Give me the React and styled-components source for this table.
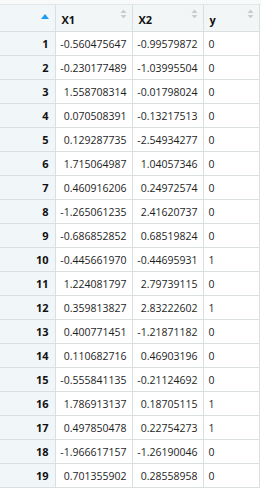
import React from 'react'
import styled, { createGlobalStyle } from 'styled-components'

const GlobalStyle = createGlobalStyle`
  body {
    margin: 0;
    background: #ffffff;
    font-family: "Open Sans", "Liberation Sans", sans-serif;
  }
`

const rows = [
  ['-0.560475647', '-0.99579872', '0'],
  ['-0.230177489', '-1.03995504', '0'],
  ['1.558708314', '-0.01798024', '0'],
  ['0.070508391', '-0.13217513', '0'],
  ['0.129287735', '-2.54934277', '0'],
  ['1.715064987', '1.04057346', '0'],
  ['0.460916206', '0.24972574', '0'],
  ['-1.265061235', '2.41620737', '0'],
  ['-0.686852852', '0.68519824', '0'],
  ['-0.445661970', '-0.44695931', '1'],
  ['1.224081797', '2.79739115', '0'],
  ['0.359813827', '2.83222602', '1'],
  ['0.400771451', '-1.21871182', '0'],
  ['0.110682716', '0.46903196', '0'],
  ['-0.555841135', '-0.21124692', '0'],
  ['1.786913137', '0.18705115', '1'],
  ['0.497850478', '0.22754273', '1'],
  ['-1.966617157', '-1.26190046', '0'],
  ['0.701355902', '0.28558958', '0'],
]

const Viewer = styled.div`
  width: 261px;
  height: 488px;
  overflow: hidden;
  background: #ffffff;
`

const TopStrip = styled.div`
  height: 4px;
  background: #f8f9f9;
  border-bottom: 1px solid #e2e6e7;
`

const Grid = styled.table`
  border-collapse: collapse;
  table-layout: fixed;
  width: 259px;
  font-size: 10.5px;
  color: #1e1e1e;
`

const HeadCell = styled.th`
  position: relative;
  height: 24px;
  padding: 2px 0 0 6px;
  background: #f3f6f7;
  border-right: 1px solid #dadfe0;
  border-bottom: 1px solid #dadfe0;
  text-align: left;
  font-weight: 700;
  font-size: 11px;
  color: #111;
  vertical-align: middle;
`

const IndexHead = styled(HeadCell)`
  background: #f1f6f8;
`

const SortIcon = styled.svg`
  position: absolute;
  top: 4px;
  right: 5px;
`

const UpArrow = styled.svg`
  position: absolute;
  top: 9px;
  right: 6px;
`

const Row = styled.tr`
  height: 24px;
`

const IndexCell = styled.td`
  height: 23px;
  padding: 0 6px 0 0;
  background: #f1f6f8;
  border-right: 1px solid #dadfe0;
  border-bottom: 1px solid #dadfe0;
  text-align: right;
  font-weight: 700;
  font-size: 11px;
  color: #111;
`

const Cell = styled.td`
  height: 23px;
  padding: ${p => (p.$num ? '0 5px 0 0' : '0 0 0 5px')};
  border-right: 1px solid #dadfe0;
  border-bottom: 1px solid #dadfe0;
  text-align: ${p => (p.$num ? 'right' : 'left')};
  white-space: nowrap;
`

const BothArrows = () => (
  <SortIcon width="7" height="10" viewBox="0 0 7 10">
    <path d="M3.5 0.5 L6.5 4 L0.5 4 Z" fill="#c9cdcf" />
    <path d="M0.5 6 L6.5 6 L3.5 9.5 Z" fill="#c9cdcf" />
  </SortIcon>
)

export default function App() {
  return (
    <Viewer>
      <GlobalStyle />
      <TopStrip />
      <Grid>
        <colgroup>
          <col style={{ width: 55 }} />
          <col style={{ width: 77 }} />
          <col style={{ width: 71 }} />
          <col style={{ width: 56 }} />
        </colgroup>
        <thead>
          <tr>
            <IndexHead>
              <UpArrow width="8" height="5" viewBox="0 0 8 5">
                <path d="M4 0 L8 5 L0 5 Z" fill="#1b9cf2" />
              </UpArrow>
            </IndexHead>
            <HeadCell>X1<BothArrows /></HeadCell>
            <HeadCell>X2<BothArrows /></HeadCell>
            <HeadCell>y<BothArrows /></HeadCell>
          </tr>
        </thead>
        <tbody>
          {rows.map((r, i) => (
            <Row key={i}>
              <IndexCell>{i + 1}</IndexCell>
              <Cell $num>{r[0]}</Cell>
              <Cell $num>{r[1]}</Cell>
              <Cell>{r[2]}</Cell>
            </Row>
          ))}
        </tbody>
      </Grid>
    </Viewer>
  )
}
